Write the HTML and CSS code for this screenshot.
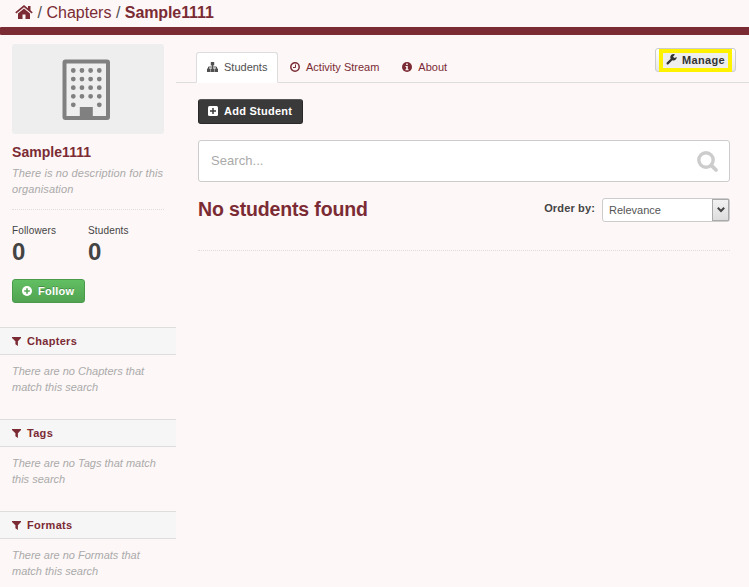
FILE: index.html
```html
<!DOCTYPE html>
<html lang="en">
<head>
<meta charset="utf-8">
<title>Sample1111</title>
<link rel="stylesheet" href="styles.css">
</head>
<body>
<header class="breadcrumb">
  <svg class="home" viewBox="0 0 18 16"><path d="M9 4.600 3 9.400V15h4.500v-4.500h3V15H15V9.400z"/><path d="M.8 8.800 9 2l8.200 6.800" fill="none" stroke="currentColor" stroke-width="1.700"/><path d="M13 2h2.500v5.200L13 5.300z"/></svg>
  <span class="slash">/</span><a>Chapters</a><span class="slash">/</span><a class="current">Sample1111</a>
</header>
<div class="band"></div>
<div class="layout">
  <aside class="sidebar">
    <section class="profile">
      <div class="picture">
        <svg viewBox="0 0 48 62" width="48" height="62"><rect x="2.500" y="2.500" width="43.500" height="56.500" rx="1" fill="#eee" stroke="#808080" stroke-width="4"/><path d="M17.800 48h13v11h-13z" fill="#808080"/><g stroke="#808080" stroke-width="4.800" stroke-linecap="round" stroke-dasharray="0 8.660"><path d="M11.300 11.500h27M11.300 20.100h27M11.300 28.700h27M11.300 37.300h27"/></g><g fill="#808080"><circle cx="11.300" cy="45.800" r="2.400"/><circle cx="37.300" cy="45.800" r="2.400"/></g></svg>
      </div>
      <h1>Sample1111</h1>
      <p class="empty description">There is no description for this organisation</p>
      <dl class="counts">
        <div><dt>Followers</dt><dd>0</dd></div>
        <div><dt>Students</dt><dd>0</dd></div>
      </dl>
      <button class="btn follow"><svg viewBox="0 0 10 10" width="10" height="10"><circle cx="5" cy="5" r="5" fill="#fff"/><path d="M5 2.200v5.600M2.200 5h5.600" stroke="#55a957" stroke-width="1.600"/></svg>Follow</button>
    </section>
    <section class="facet">
      <h2><svg viewBox="0 0 9 9" width="9" height="9"><path d="M0 0h9v1L5.900 4.300V9L3.400 7.300v-3L0 1z"/></svg>Chapters</h2>
      <p class="empty">There are no Chapters that match this search</p>
    </section>
    <section class="facet">
      <h2><svg viewBox="0 0 9 9" width="9" height="9"><path d="M0 0h9v1L5.900 4.300V9L3.400 7.300v-3L0 1z"/></svg>Tags</h2>
      <p class="empty">There are no Tags that match this search</p>
    </section>
    <section class="facet">
      <h2><svg viewBox="0 0 9 9" width="9" height="9"><path d="M0 0h9v1L5.900 4.300V9L3.400 7.300v-3L0 1z"/></svg>Formats</h2>
      <p class="empty">There are no Formats that match this search</p>
    </section>
  </aside>
  <main class="primary">
    <div class="page-header">
      <nav class="tabs">
        <a class="tab active"><svg viewBox="0 0 11 10" width="11" height="10"><path d="M3.800 0h3.400v3.400H3.800zM0 6.500h3.400v3.500H0zM3.800 6.500h3.400v3.500H3.800zM7.600 6.500H11v3.500H7.600z"/><path d="M5.500 3v4M1.500 7V5h8v2" fill="none" stroke="currentColor"/></svg>Students</a>
        <a class="tab activity"><svg viewBox="0 0 10 10" width="10" height="10"><circle cx="5" cy="5" r="4.200" fill="none" stroke="currentColor" stroke-width="1.500"/><path d="M5.500 2.500v3H3" fill="none" stroke="currentColor"/></svg>Activity Stream</a>
        <a class="tab about"><svg viewBox="0 0 10 10" width="10" height="10"><circle cx="5" cy="5" r="5"/><path d="M4.200 1.500h1.600v1.500H4.200zM3.500 4h2.300v3.200h.800v1H3.400v-1h.800V5h-.7z" fill="#fdf7f7"/></svg>About</a>
      </nav>
      <button class="manage"><span><svg viewBox="0 0 11 11" width="11" height="11"><path d="M1.600 9.400 6.300 4.700" stroke="currentColor" stroke-width="2.200" stroke-linecap="round"/><path d="M9 .4A3.200 3.200 0 1 0 10.700 3L8.500 4 7 2.700z"/></svg>Manage</span></button>
    </div>
    <div class="content">
      <button class="btn add"><svg viewBox="0 0 10 10" width="10" height="10"><rect width="10" height="10" rx="1.500" fill="#fff"/><path d="M5 2v6M2 5h6" stroke="#3b3b3b" stroke-width="1.500"/></svg>Add Student</button>
      <div class="search"><span>Search...</span><svg viewBox="0 0 22 22" width="22" height="22"><circle cx="9" cy="9" r="7.200" fill="none" stroke="#ccc" stroke-width="3.400"/><path d="m14.300 14.300 4.700 4.700" stroke="#ccc" stroke-width="3.800" stroke-linecap="round"/></svg></div>
      <div class="results">
        <h2>No students found</h2>
        <div class="order"><label>Order by:</label><div class="select"><span>Relevance</span><i><svg viewBox="0 0 8 6" width="8" height="6"><path d="M.8.800 4 4l3.200-3.200" fill="none" stroke="#444" stroke-width="2"/></svg></i></div></div>
      </div>
    </div>
  </main>
</div>
</body>
</html>
```

FILE: styles.css
```css
* { box-sizing: border-box; }
body { margin: 0; height: 587px; overflow: hidden; background: #fdf7f7; font: 11px/16px "Liberation Sans", Arial, sans-serif; color: #444; }
h1, h2, p, dl, dd { margin: 0; }
svg { display: block; flex: none; fill: currentColor; }
button { font: inherit; cursor: pointer; }

.breadcrumb { height: 27px; padding: 2px 0 0 15px; display: flex; align-items: flex-start; font-size: 16px; line-height: 21px; color: #7b2b34; }
.home { width: 18px; height: 16px; margin-top: 2px; }
.slash { margin: 0 4.500px; color: #505050; }
.current { font-weight: bold; letter-spacing: -.1px; }
.band { height: 8px; background: #7b2b33; border-radius: 1px 0 0 1px; }

.layout { display: flex; }
.sidebar { width: 176px; flex: none; }
.profile { height: 292px; padding: 9px 12px 0; }
.picture { width: 152px; height: 90px; padding-top: 15px; display: flex; justify-content: center; align-items: flex-start; background: #eee; border-radius: 3px; }
.picture svg { margin-right: 4px; }
h1 { margin-top: 8px; font-size: 14px; line-height: 20px; letter-spacing: .05px; color: #7b2b34; }
.empty { color: #aaa; font-style: italic; }
.description { margin: 3px -4px 0 0; letter-spacing: .12px; }
.counts { display: flex; margin-top: 12px; padding-top: 13px; border-top: 1px dotted #ddd; }
.counts div { width: 76px; }
.counts dt { font-size: 10px; letter-spacing: .15px; }
.counts dd { font-size: 24px; line-height: 26px; font-weight: bold; }
.btn { display: flex; align-items: center; border-radius: 3px; color: #fff; font-weight: bold; letter-spacing: .25px; }
.btn svg { margin-right: 6px; }
.follow { width: 73px; height: 24px; margin-top: 14px; padding: 0 9px; border: 1px solid #4a9a4c; background: linear-gradient(#62bf62, #51a351); text-shadow: 0 -1px 0 rgba(0,0,0,.25); }

.facet { height: 92px; }
.facet h2 { height: 28px; padding-left: 12px; display: flex; align-items: center; background: #f6f6f6; border: solid #ddd; border-width: 1px 0; font-size: 11px; letter-spacing: .3px; color: #7b2b34; }
.facet h2 svg { margin-right: 6px; }
.facet p { padding: 8px 12px 0; }

.primary { flex: 1; }
.page-header { height: 48px; display: flex; justify-content: space-between; align-items: flex-start; border-bottom: 1px solid #ddd; padding: 13px 13px 0 20px; }
.tabs { display: flex; margin-top: 4px; }
.tab { display: flex; align-items: center; height: 31px; padding: 0 11px 2px; color: #7b2b34; }
.tab svg { margin-right: 6px; }
.activity { padding-left: 12px; }
.about { padding-left: 12px; }
.active { width: 82px; padding: 0 10px 1px; border: 1px solid #ddd; border-bottom-color: #fff; border-radius: 3px 3px 0 0; background: #fff; color: #505050; }
.manage { width: 81px; height: 24px; padding: 0 3px; border: 1px solid #ccc; border-radius: 3px; background: linear-gradient(#fff, #e6e6e6); font-weight: bold; color: #333; letter-spacing: .35px; }
.manage span { display: flex; align-items: center; height: 23px; border: 4px solid #fff200; padding: 0 0 2px 3px; background: #eee; }
.manage svg { margin-right: 5px; }

.content { padding: 16px 19px 0 22px; }
.add { width: 105px; height: 25px; padding: 0 9px 1px; background: #3b3a3a; border: 1px solid #292929; border-top-color: #555; }
.search { display: flex; align-items: center; justify-content: space-between; height: 42px; margin-top: 16px; padding: 0 10px 0 12px; background: #fff; border: 1px solid #ccc; border-radius: 3px; font-size: 13px; color: #aaa; }
.search span { letter-spacing: .05px; }
.search svg { margin-top: 2px; }
.results { height: 69px; display: flex; justify-content: space-between; align-items: flex-start; padding-top: 16px; border-bottom: 1px dotted #ddd; }
.results h2 { margin-top: -1px; font-size: 19.500px; line-height: 24px; letter-spacing: -.15px; color: #7b2b34; }
.order { display: flex; }
.order label { margin: 2px 7px 0 0; font-weight: bold; letter-spacing: .15px; }
.select { width: 128px; height: 24px; display: flex; align-items: center; justify-content: space-between; padding-left: 6px; border: 1px solid #ccc; border-radius: 3px; background: #fff; color: #555; }
.select i { width: 17px; height: 22px; display: flex; align-items: center; justify-content: center; border: 1px solid #aaa; background: linear-gradient(#f2f2f2, #ddd); }
```
